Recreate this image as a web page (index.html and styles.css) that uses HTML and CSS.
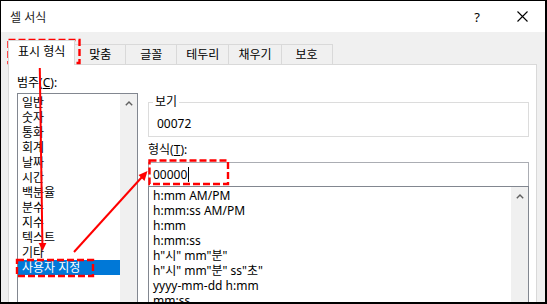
FILE: index.html
```html
<!DOCTYPE html>
<html>
<head>
  <meta charset="UTF-8">
  <title>셀 서식</title>
  <link rel="stylesheet" href="styles.css">
</head>
<body>

<div class="window">

  <!-- title bar -->
  <div class="titlebar">
    <span class="title">셀 서식</span>
    <span class="help">?</span>
    <span class="close">
      <svg width="11" height="11" viewBox="0 0 11 11"><path d="M0.5 0.5 L10.5 10.5 M10.5 0.5 L0.5 10.5" stroke="#000" stroke-width="1.1" fill="none"/></svg>
    </span>
  </div>

  <div class="client">

    <!-- tabs -->
    <div class="tabs">
      <div class="tab active">표시 형식</div>
      <div class="tab">맞춤</div>
      <div class="tab">글꼴</div>
      <div class="tab">테두리</div>
      <div class="tab">채우기</div>
      <div class="tab">보호</div>
    </div>

    <div class="panel">

      <!-- category list -->
      <div class="category">
        <div class="label">범주(<u>C</u>):</div>
        <div class="listbox">
          <ul class="items">
            <li>일반</li>
            <li>숫자</li>
            <li>통화</li>
            <li>회계</li>
            <li>날짜</li>
            <li>시간</li>
            <li>백분율</li>
            <li>분수</li>
            <li>지수</li>
            <li>텍스트</li>
            <li>기타</li>
            <li class="selected">사용자 지정</li>
          </ul>
          <div class="scrollbar">
            <svg width="8" height="5" viewBox="0 0 8 5"><path d="M0.8 4.2 L4 1 L7.2 4.2" stroke="#606060" stroke-width="1.4" fill="none"/></svg>
          </div>
        </div>
      </div>

      <!-- format side -->
      <div class="format">
        <fieldset class="sample">
          <legend>보기</legend>
          <div class="sample-value">00072</div>
        </fieldset>

        <div class="label">형식(<u>T</u>):</div>
        <div class="input">00000<span class="caret"></span></div>

        <div class="listbox">
          <ul class="items">
            <li>h:mm AM/PM</li>
            <li>h:mm:ss AM/PM</li>
            <li>h:mm</li>
            <li>h:mm:ss</li>
            <li>h"시" mm"분"</li>
            <li>h"시" mm"분" ss"초"</li>
            <li>yyyy-mm-dd h:mm</li>
            <li>mm:ss</li>
          </ul>
          <div class="scrollbar">
            <svg width="8" height="5" viewBox="0 0 8 5"><path d="M0.8 4.2 L4 1 L7.2 4.2" stroke="#606060" stroke-width="1.4" fill="none"/></svg>
          </div>
        </div>
      </div>

    </div>
  </div>

  <!-- red annotation marks drawn over the dialog -->
  <svg class="marks" width="547" height="304" viewBox="0 0 547 304">
    <g fill="none" stroke="#f00" stroke-width="2.4" stroke-dasharray="7 3">
      <rect x="8.5" y="40" width="71" height="23"/>
      <rect x="17" y="260" width="76" height="16"/>
      <rect x="149.5" y="160.5" width="78.5" height="23.5"/>
    </g>
    <g stroke="#f00" stroke-width="2" fill="none">
      <line x1="39.8" y1="68" x2="42.4" y2="244"/>
      <line x1="74" y1="252" x2="142" y2="177"/>
    </g>
    <g fill="#f00">
      <polygon points="38.6,243 46.4,243 42.6,251"/>
      <polygon points="147.5,171 138.5,175 144.5,181"/>
    </g>
  </svg>

</div>

</body>
</html>
```

FILE: styles.css
```css
/*
 *  dialog frame
 */
body {
  margin: 0;
  background: #fff;
}

.window {
  position: relative;
  width: 547px;
  height: 304px;
  box-sizing: border-box;
  border: 1px solid #000;
  border-right-width: 2px;
  border-bottom-width: 2px;
  display: flex;
  flex-direction: column;
  overflow: hidden;
  font-family: "Noto Sans", "Noto Sans CJK KR", sans-serif;
  font-size: 12px;
  color: #000;
}

/* title bar */
.titlebar {
  height: 31px;
  flex: none;
  display: flex;
  align-items: center;
  padding-left: 9px;
  background: #fff;
}

.title {
  flex: 1;
  color: #222;
}

.help {
  width: 44px;
  text-align: center;
  font-size: 13px;
}

.close {
  width: 46px;
  display: flex;
  justify-content: center;
  align-items: center;
}

/* gray client area */
.client {
  flex: 1;
  display: flex;
  flex-direction: column;
  background: #f0f0f0;
  padding: 0 8px 0 7px;
  min-height: 0;
}

/*
 *  tabs
 */
.tabs {
  height: 33px;
  flex: none;
  display: flex;
  align-items: flex-end;
  margin-bottom: -1px;
}

.tab {
  height: 20px;
  margin-bottom: 1px;
  min-width: 52px;
  box-sizing: border-box;
  padding: 0 9px;
  border: 1px solid #d9d9d9;
  border-bottom: none;
  margin-left: -1px;
  text-align: center;
  line-height: 20px;
  background: #f0f0f0;
}

.tab.active {
  position: relative;
  z-index: 1;
  height: 25px;
  margin-bottom: 0;
  margin-left: 0;
  padding-bottom: 4px;
  line-height: 22px;
  background: #fff;
}

/*
 *  tab page
 */
.panel {
  flex: 1;
  display: flex;
  gap: 10px;
  min-height: 0;
  background: #fff;
  border: 1px solid #d9d9d9;
  border-bottom: none;
  padding: 10px 7px 0 8px;
}

.label {
  line-height: 15px;
}

.label u {
  text-underline-offset: 1px;
}

.category {
  width: 121px;
  display: flex;
  flex-direction: column;
}

.category .label {
  margin-bottom: 3px;
}

.format {
  flex: 1;
  display: flex;
  flex-direction: column;
  min-width: 0;
}

/* list boxes */
.listbox {
  flex: 1;
  display: flex;
  border: 1px solid #828790;
  border-bottom: none;
  min-height: 0;
}

.items {
  flex: 1;
  margin: 0;
  padding: 1px 0 0 0;
  list-style: none;
}

.items li {
  line-height: 15px;
  height: 15px;
  padding-left: 4px;
  white-space: nowrap;
}

.items li.selected {
  background: #0078d7;
  color: #fff;
}

.scrollbar {
  width: 17px;
  background: #f0f0f0;
  display: flex;
  justify-content: center;
  padding-top: 7px;
}

/* sample group */
.sample {
  margin: 20px 0 0 0;
  padding: 7px 0 5px 8px;
  border: 1px solid #dcdcdc;
  min-width: 0;
}

.sample legend {
  padding: 0 2px;
  margin-left: -4px;
  line-height: 14px;
}

.sample-value {
  line-height: 15px;
}

.format .label {
  margin: 5px 0 5px 0;
}

/* format input */
.input {
  height: 24px;
  box-sizing: border-box;
  border: 1px solid #abadb3;
  border-bottom: none;
  padding: 4px 0 0 4px;
  line-height: 15px;
  display: flex;
  align-items: flex-start;
}

.caret {
  width: 1px;
  height: 15px;
  background: #000;
  margin-left: 1px;
}

/*
 *  annotations
 */
.marks {
  position: absolute;
  top: -1px;
  left: -1px;
  pointer-events: none;
}
```
